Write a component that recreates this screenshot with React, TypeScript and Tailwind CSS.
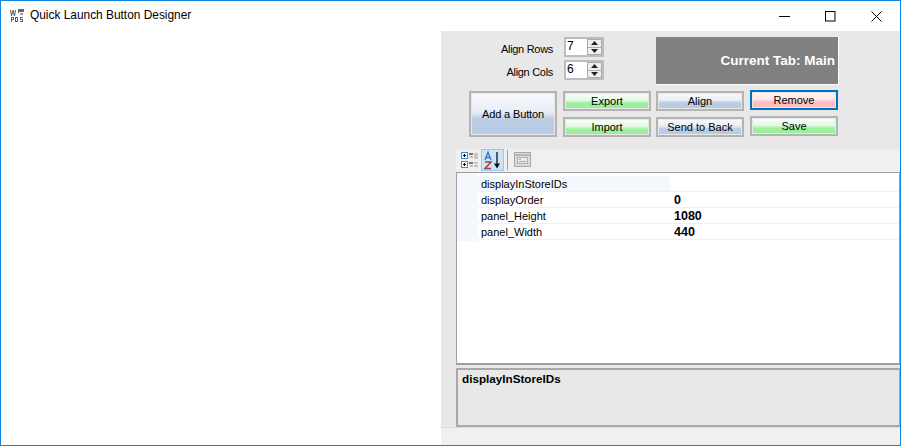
const BLUE_BTN = 'bg-[linear-gradient(#f7f8fb_0%,#e8edf5_45%,#bccde4_62%,#b8cbe3_100%)]'
const GREEN_BTN = 'bg-[linear-gradient(#f7fdf7_0%,#e4f9e4_45%,#a0f0a0_65%,#98ee98_100%)]'
const RED_BTN = 'bg-[linear-gradient(#fdf5f5_0%,#fde8e8_45%,#fdc0c0_65%,#fdbcbc_100%)]'

function Btn({ label, fill, focused }: { label: string; fill: string; focused?: boolean }) {
  return (
    <div className={`h-5 w-[88px] border-[2px] ${focused ? 'border-[#0072c6]' : 'border-[#b4b4b4]'} p-px`}>
      <div className={`flex h-full w-full items-center justify-center text-[11px] leading-none text-black ${fill}`}>
        {label}
      </div>
    </div>
  )
}

function Spinner({ value }: { value: string }) {
  return (
    <div className="flex h-5 w-10 border-[2px] border-[#bdbdbd] bg-white">
      <div className="flex-1 pl-px text-[12px] leading-[14px] text-black">{value}</div>
      <div className="flex w-[15px] flex-col bg-[#f0f0f0]">
        <div className="flex flex-1 items-center justify-center border border-[#acacac] text-black">
          <svg width="7" height="4" viewBox="0 0 7 4"><path d="M3.500 0 7 4H0z" fill="#222" /></svg>
        </div>
        <div className="flex flex-1 items-center justify-center border border-t-0 border-[#acacac] text-black">
          <svg width="7" height="4" viewBox="0 0 7 4"><path d="M0 0h7L3.500 4z" fill="#222" /></svg>
        </div>
      </div>
    </div>
  )
}

function PropRow({ name, value, selected }: { name: string; value?: string; selected?: boolean }) {
  return (
    <div className="flex h-4">
      <div className={`flex w-[192px] shrink-0 items-center border-b border-[#f0f0f0] pl-[3px] pt-px text-[11px] leading-none text-black ${selected ? 'bg-[#f4f7fc]' : ''}`}>
        {name}
      </div>
      <div className="flex flex-1 items-center border-b border-[#f0f0f0] pl-[4px] pt-px text-[12.500px] font-bold leading-none text-black">{value}</div>
    </div>
  )
}

export default function App() {
  return (
    <div className="flex h-[446px] w-[901px] flex-col overflow-hidden border border-[#0c86e0] bg-white font-['Liberation_Sans',sans-serif]">
      {/* Title bar */}
      <div className="flex h-[30px] shrink-0 items-center bg-white">
        <svg width="16" height="16" viewBox="0 0 16 16" className="ml-[9px]">
          <path d="M0 2l1 6h1l1-4 1 4h1l1-6H5L4.500 6 3.500 2h-1L1.500 6 1 2z" fill="#555" />
          <path d="M8 1h6v3H9v1H8z" fill="#666" />
          <rect x="10" y="5" width="3" height="2" fill="#999" />
          <path d="M1 9h3v3H2v2H1zm1 1v1h1v-1zM5 9h3v5H5zm1 1v3h1v-3zM10 9h3v1h-2v1h2v3h-3v-1h2v-1h-2z" fill="#4c6a88" />
        </svg>
        <span className="ml-[4px] text-[11.900px] leading-none text-black">Quick Launch Button Designer</span>
        <div className="ml-auto flex items-center">
          <svg width="11" height="11" viewBox="0 0 11 11" className="mr-[35px]"><path d="M0 5.500h11" stroke="#000" /></svg>
          <svg width="11" height="11" viewBox="0 0 11 11" className="mr-[35px]"><rect x=".5" y=".5" width="9.500" height="9.500" fill="none" stroke="#000" /></svg>
          <svg width="11" height="11" viewBox="0 0 11 11" className="mr-[18px]"><path d="M.5.500l10 10M10.500.500l-10 10" stroke="#000" /></svg>
        </div>
      </div>

      <div className="flex min-h-0 flex-1">
        {/* Canvas */}
        <div className="w-[440px] shrink-0 bg-white" />

        {/* Side panel */}
        <div className="flex w-[459px] flex-col bg-[#e8e8e8]">
          <div className="flex h-[118px] shrink-0 flex-col">
            <div className="flex h-[54px] pt-[6px]">
              <div className="flex w-[123px] flex-col items-end gap-[3px] pr-[11px] pt-[2px]">
                <div className="flex h-5 items-center text-[11px] leading-none tracking-[-0.3px] text-black">Align Rows</div>
                <div className="flex h-5 items-center text-[11px] leading-none tracking-[-0.3px] text-black">Align Cols</div>
              </div>
              <div className="flex flex-col gap-[3px]">
                <Spinner value="7" />
                <Spinner value="6" />
              </div>
              <div className="ml-[52px] flex h-12 w-[183px] items-center justify-end border-r border-b border-white bg-[#808080] pr-[3px] text-[13.500px] font-bold leading-none text-white">
                Current Tab: Main
              </div>
            </div>
            <div className="flex pl-[28px] pt-[6px]">
              <div className="h-[46px] w-[88px] border-[2px] border-[#b4b4b4] p-px">
                <div className={`flex h-full w-full items-center justify-center text-[11px] leading-none tracking-[-0.15px] text-black ${BLUE_BTN}`}>
                  Add a Button
                </div>
              </div>
              <div className="ml-[6px] flex flex-col gap-[6px]">
                <Btn label="Export" fill={GREEN_BTN} />
                <Btn label="Import" fill={GREEN_BTN} />
              </div>
              <div className="ml-[5px] flex flex-col gap-[6px]">
                <Btn label="Align" fill={BLUE_BTN} />
                <Btn label="Send to Back" fill={BLUE_BTN} />
              </div>
              <div className="ml-[6px] -mt-px flex flex-col gap-[6px]">
                <Btn label="Remove" fill={RED_BTN} focused />
                <Btn label="Save" fill={GREEN_BTN} />
              </div>
            </div>
          </div>

          {/* Property grid */}
          <div className="ml-[15px] flex min-h-0 flex-1 flex-col">
            <div className="flex h-[23px] shrink-0 items-center gap-px bg-[#f0f0f0] pb-px pl-[4px]">
              <svg width="19" height="18" viewBox="0 0 19 18" className="mr-px">
                <rect x="1.500" y="1.500" width="6" height="6" fill="#fff" stroke="#3a8fd0" />
                <rect x="1.500" y="10.500" width="6" height="6" fill="#fff" stroke="#3a8fd0" />
                <path d="M3 4.500h3M4.500 3v3M3 13.500h3M4.500 12v3" stroke="#000" />
                <path d="M9 3h4M9 12h4" stroke="#555" strokeWidth="1.500" />
                <path d="M10 6h3M14 3h4M14 5h4M14 7h4M10 15h3M14 12h4M14 15h4" stroke="#999" />
              </svg>
              <div className="flex h-[22px] w-[23px] items-center justify-center border border-[#90c8f6] bg-[#cce4f7]">
                <svg width="19" height="19" viewBox="0 0 19 19">
                  <path d="M2 9 5 1l3 8M3 6.500h4" fill="none" stroke="#3c6fc0" strokeWidth="1.300" />
                  <path d="M2 11h6L2 17.500h6" fill="none" stroke="#a83c3c" strokeWidth="1.500" />
                  <path d="M14 1v13" stroke="#111" strokeWidth="1.300" />
                  <path d="M11 12.500h6l-3 5z" fill="#111" />
                </svg>
              </div>
              <div className="mx-[2px] h-[20px] w-px bg-[#a0a0a0]" />
              <svg width="18" height="16" viewBox="0 0 18 16" className="ml-[3px]">
                <rect x=".5" y=".5" width="16" height="14" fill="#dcdcdc" stroke="#a8a8a8" />
                <path d="M1 3h15" stroke="#b8b8b8" strokeWidth="2" />
                <rect x="3.500" y="5.500" width="10" height="6" fill="#ececec" stroke="#b0b0b0" />
                <path d="M5 7.500h2M5 9.500h7" stroke="#a8a8a8" />
              </svg>
            </div>
            <div className="h-[193px] shrink-0 border border-[#a0a0a0] border-b-[2px] bg-white">
              <div className="flex h-[68px]">
                <div className="w-[21px] shrink-0 bg-[#f4f7fc]" />
                <div className="flex-1 pt-[3px]">
                  <PropRow name="displayInStoreIDs" selected />
                  <PropRow name="displayOrder" value="0" />
                  <PropRow name="panel_Height" value="1080" />
                  <PropRow name="panel_Width" value="440" />
                </div>
              </div>
            </div>
            <div className="mt-[3px] h-[59px] shrink-0 border-[2px] border-[#a8a8a8] border-r-[1px] bg-[#e8e8e8] pl-[4px] pt-[2px] text-[11.700px] font-bold leading-[14px] text-black">
              displayInStoreIDs
            </div>
          </div>

          {/* Status strip */}
          <div className="h-[18px] shrink-0 border-t border-[#dcdcdc] bg-[#f0f0f0]" />
        </div>
      </div>
    </div>
  )
}
